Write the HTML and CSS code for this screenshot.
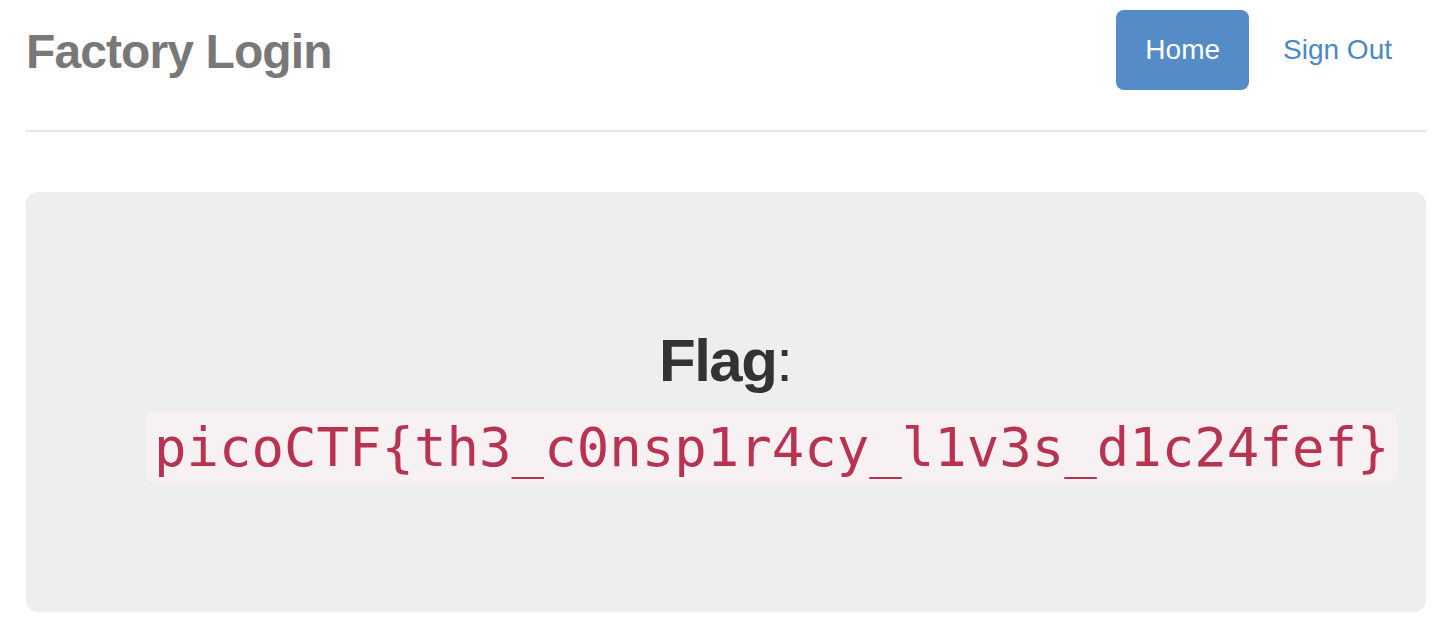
FILE: index.html
```html
<!DOCTYPE html>
<html lang="en">
<head>
<meta charset="utf-8">
<title>Factory Login</title>
<link rel="stylesheet" href="styles.css">
</head>
<body>
<div class="container">
  <div class="header">
    <h3 class="brand">Factory Login</h3>
    <nav class="nav">
      <a class="pill active" href="#">Home</a>
      <a class="pill" href="#">Sign Out</a>
    </nav>
  </div>
  <div class="jumbotron">
    <p class="flag"><b>Flag</b>: <code>picoCTF{th3_c0nsp1r4cy_l1v3s_d1c24fef}</code></p>
  </div>
</div>
</body>
</html>
```
FILE: styles.css
```css
html, body {
  margin: 0;
  padding: 0;
  background: #fff;
}
body {
  font-family: "Liberation Sans", Arial, Helvetica, sans-serif;
  color: #333;
}
.container {
  width: 1400px;
  margin-left: 26px;
}
.header {
  display: flex;
  justify-content: space-between;
  align-items: flex-start;
  padding-top: 10px;
  padding-bottom: 38px;
  border-bottom: 2px solid #e5e5e5;
}
.brand {
  margin: 0;
  padding-top: 2px;
  font-size: 48px;
  line-height: 80px;
  font-weight: bold;
  color: #787878;
  letter-spacing: -0.9px;
}
.nav {
  display: flex;
  gap: 4px;
  margin-right: 4px;
}
.pill {
  display: block;
  padding: 20px 30px;
  font-size: 28px;
  line-height: 40px;
  border-radius: 8px;
  color: #4a87c7;
  text-decoration: none;
}
.pill.active {
  padding: 20px 29px;
  background: #558bc7;
  color: #fff;
}
.jumbotron {
  margin-top: 60px;
  padding: 96px 120px;
  background: #eee;
  border-radius: 12px;
  text-align: center;
}
.flag {
  margin: 30px 0 26px;
  font-size: 60px;
  line-height: 85px;
  color: #333;
}
.flag b {
  font-weight: bold;
  letter-spacing: -1.5px;
}
code {
  font-family: "DejaVu Sans Mono", "Liberation Mono", monospace;
  font-size: 54px;
  padding: 4px 8px;
  color: #b8334f;
  background: #f8f1f3;
  border-radius: 8px;
}
```
